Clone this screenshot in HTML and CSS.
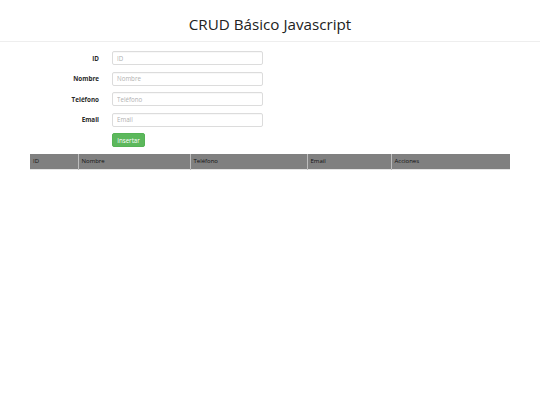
FILE: index.html
```html
<!DOCTYPE html>
<html lang="es">
<head>
<meta charset="utf-8">
<title>CRUD Básico Javascript</title>
<link rel="stylesheet" href="styles.css">
</head>
<body>
<header class="page-header">
  <h1 class="title">CRUD Básico Javascript</h1>
</header>
<main class="content">
  <form class="crud-form">
    <label class="field-label" for="id">ID</label>
    <input class="field-input" id="id" type="text" placeholder="ID">
    <label class="field-label" for="nombre">Nombre</label>
    <input class="field-input" id="nombre" type="text" placeholder="Nombre">
    <label class="field-label" for="telefono">Teléfono</label>
    <input class="field-input" id="telefono" type="text" placeholder="Teléfono">
    <label class="field-label" for="email">Email</label>
    <input class="field-input" id="email" type="text" placeholder="Email">
    <span class="spacer"></span>
    <div class="actions"><button class="btn-insert" type="button">Insertar</button></div>
  </form>
  <table class="data-table">
    <thead>
      <tr>
        <th class="col-id">ID</th>
        <th class="col-nombre">Nombre</th>
        <th class="col-tel">Teléfono</th>
        <th class="col-email">Email</th>
        <th class="col-acc">Acciones</th>
      </tr>
    </thead>
    <tbody></tbody>
  </table>
</main>
</body>
</html>
```

FILE: styles.css
```css
html, body {
  margin: 0;
  padding: 0;
  background: #fff;
}
body {
  font-family: "Open Sans", "Noto Sans", sans-serif;
  color: #333;
}
.page-header {
  border-bottom: 1px solid #eeeeee;
  height: 41px;
  display: flex;
  align-items: center;
  justify-content: center;
}
.title {
  margin: 0;
  padding-top: 9px;
  font-size: 15.2px;
  font-weight: 400;
  color: #222;
  line-height: 1;
}
.content {
  padding: 9px 30px 0 30px;
}
.crud-form {
  display: grid;
  grid-template-columns: 69px 151px;
  column-gap: 13px;
  row-gap: 6.5px;
  align-items: center;
  margin-bottom: 7px;
}
.field-label {
  text-align: right;
  font-size: 6.3px;
  font-weight: 700;
  color: #2a2a2a;
  opacity: 0.999;
}
.field-input {
  box-sizing: border-box;
  height: 14px;
  width: 151px;
  border: 1px solid #dcdcdc;
  border-radius: 2px;
  padding: 0 4px;
  font-family: "Open Sans", "Noto Sans", sans-serif;
  font-size: 6.2px;
  color: #555;
  box-shadow: inset 0 1px 1px rgba(0,0,0,0.03);
}
.field-input::placeholder {
  color: #b0b0b0;
}
.actions {
  display: flex;
}
.btn-insert {
  height: 14px;
  width: 33px;
  padding: 0;
  border: 1px solid #55b355;
  border-radius: 2px;
  background: #5cb85c;
  color: #fff;
  font-family: "Open Sans", "Noto Sans", sans-serif;
  font-size: 6.2px;
}
.data-table {
  width: 480px;
  border-collapse: collapse;
  border-bottom: 1px solid #e6e6e6;
}
.data-table th {
  background: #808080;
  color: #111;
  font-size: 6px;
  font-weight: 400;
  text-align: left;
  height: 15px;
  padding: 0 3px;
  border-left: 1px solid #bdbdbd;
  box-sizing: border-box;
}
.data-table th:first-child {
  border-left: none;
}
.col-id { width: 48px; }
.col-nombre { width: 112px; }
.col-tel { width: 117px; }
.col-email { width: 84px; }
.col-acc { width: 119px; }
```
